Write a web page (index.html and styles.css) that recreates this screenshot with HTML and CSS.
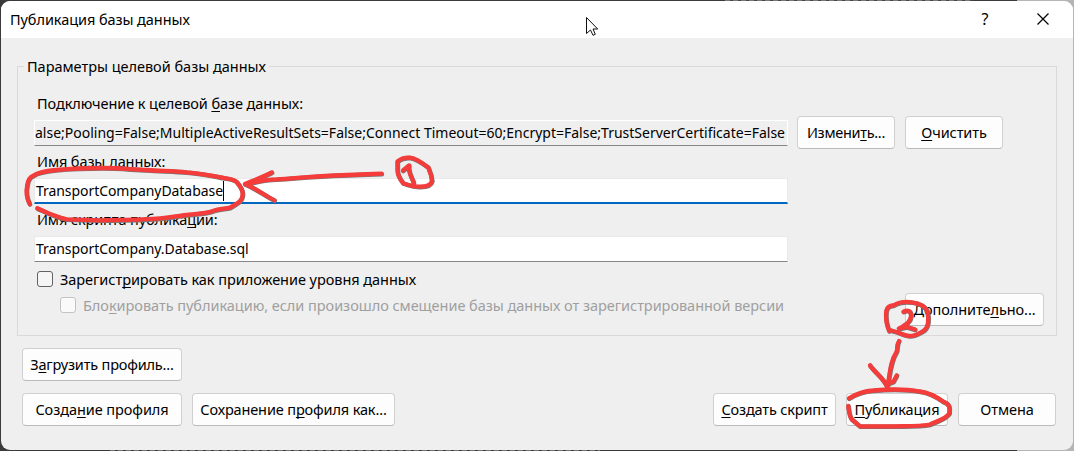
FILE: index.html
```html
<!DOCTYPE html>
<html lang="ru">
<head>
<meta charset="utf-8">
<title>Публикация базы данных</title>
<link rel="stylesheet" href="styles.css">
</head>
<body>
<div class="desktop">
  <div class="dialog">
    <header class="titlebar">
      <span class="title">Публикация базы данных</span>
      <span class="help">?</span>
      <svg class="close" width="12" height="12" viewBox="0 0 12 12"><path d="M.5 .5 11.5 11.5M11.5 .5 .5 11.5"/></svg>
    </header>
    <main class="content">
      <fieldset class="group">
        <legend>Параметры целевой базы данных</legend>
        <div class="label label-first">Подключение к целевой <u>б</u>азе данных:</div>
        <div class="connection">
          <div class="field readonly"><span>alse;Pooling=False;MultipleActiveResultSets=False;Connect Timeout=60;Encrypt=False;TrustServerCertificate=False</span></div>
          <button class="btn w98 tight">Измени<u>т</u>ь...</button>
          <button class="btn w98 clear"><u>О</u>чистить</button>
        </div>
        <div class="label label-name">И<u>м</u>я базы данных:</div>
        <div class="field focused"><span>TransportCompanyDatabase</span><i class="caret"></i></div>
        <div class="label label-script">Имя скрипта публика<u>ц</u>ии:</div>
        <div class="field"><span>TransportCompany.Database.sql</span></div>
        <div class="options">
          <div class="checks">
            <div class="check"><i class="box"></i><span>Зарегист<u>р</u>ировать как приложение уровня данных</span></div>
            <div class="check disabled"><i class="box"></i><span>Бло<u>к</u>ировать публикацию, если произошло смещение базы данных от зарегистрированной версии</span></div>
          </div>
          <button class="btn advanced">Дополните<u>л</u>ьно...</button>
        </div>
      </fieldset>
      <div class="actions load-row">
        <button class="btn w160 load">З<u>а</u>грузить профиль...</button>
      </div>
      <div class="actions">
        <button class="btn w160">Созда<u>н</u>ие профиля</button>
        <button class="btn w203">Сохранение п<u>р</u>офиля как...</button>
        <button class="btn w123 push"><u>С</u>оздать скрипт</button>
        <button class="btn w102"><u>П</u>убликация</button>
        <button class="btn w98">Отмена</button>
      </div>
    </main>
  </div>
  <svg class="marks" width="1074" height="451" viewBox="0 0 1074 451">
    <defs>
      <g id="strokes">
        <path d="M29.7 204C26 197 26 191 27.3 185 28 180 30 177 33.3 175.7 38 172 46 171 56 170 72 168.5 88 168 103 168 120 168 132 169.5 146.7 170 160 171 174 171 186.7 172.3 198 173 208 175 216.7 176.5 226 179 233 178 236.7 182 241 187 242.7 190 242.7 194 242.5 200 240 202 230 207.7 225 209 219 208.500 213 211 206 213.500 196 214 186.700 215 176 216 168 218 156.700 218.700 138 220 120 220 100 220.300L66.700 219.300C60 218 56 216 50 214L37.300 208.300"/>
        <path d="M245 184C256 182 264 179.500 276.700 179.300 304 177.500 330 175 360 174.500L381.500 173.700M271.700 172.500C263 177 252 181 245 184 255 188 264 195 274.300 200.300"/>
        <path d="M397.500 170V161.500C401 158.500 406 157.500 410 157.700 415 158 421 162 428.300 167.500L431 175 432 181C431 185.500 427 186.700 420 186.700 411 187 407 184 403.300 183.300 399 178 397.500 174 397.500 170M403 170.500 409 165.500C408 173 412 177 413.700 183"/>
        <path d="M889.300 331C887 326 886 320 886 315 886 308 888 306 893.300 305.500 899 302 906 301.500 912 302.300 920 303 926 307 927.500 312 929 320 928 328 923.300 331 918 334 915 336 910 336 904 336 899 332 893 331L889.300 330"/>
        <path d="M903.500 311.700C908 309.500 911 311 911 315.500 911 321 907 324 898.800 328.700L907 327 915 329.500"/>
        <path d="M899 341C896 346 898 349 896.500 352 890 362 890 374 887.300 388M870 365.300C874 372 883 377 887.300 387M887.300 384 893.500 381.500 896.700 375.500"/>
        <path d="M849 398.300C856 394 864 391 873 390.500 890 389 906 389 920 391.500 931 393 938 398 943 401.500 950 404 950 408 949.300 413.300 946 419 937 421 930 424.500 919 426.500 907 426 894 426.300H860L852 419.500C849 416 849 411 848.300 406"/>
      </g>
    </defs>
    <use href="#strokes" class="ink-shadow"/>
    <use href="#strokes" class="ink"/>
    <path class="cursor" d="M586.500 17.500V33.500L590.500 30 593 35.300 595.300 34.300 593 29H597.700Z"/>
  </svg>
</div>
</body>
</html>
```
FILE: styles.css
```css
* { box-sizing: border-box; }
body { margin: 0; font: 14.5px/20px "Noto Sans", sans-serif; color: #000; }
u { text-decoration-thickness: 1px; text-underline-offset: 2px; text-decoration-skip-ink: none; }
.desktop {
  position: relative; width: 1074px; height: 451px; padding: 1px; overflow: hidden;
  background:
    repeating-linear-gradient(to right, #77777a 0 5px, #454545 5px 8px) 725px 0 / 248px 1px no-repeat,
    repeating-linear-gradient(to right, #70706b 0 5px, #3b3b3b 5px 8px) 110px 450px / 490px 1px no-repeat,
    linear-gradient(to right, #3a3a3a 0 1017px, #b5b5b5 1017px);
}
.dialog { height: 449px; border-radius: 9px; overflow: hidden; background: #efefef; }
.titlebar {
  display: flex; align-items: center; height: 37px; padding: 0 24px 1px 9px; background: #fff;
}
.title { letter-spacing: -.07px; }
.help { margin-left: auto; width: 10px; text-align: center; font-size: 16px; }
.close { margin-left: 47px; fill: none; stroke: #000; stroke-width: 1.2; }
.content { padding: 18px 16px 0; }
.group {
  height: 280px; margin: 0; padding: 0 12px 0 16px; border: 1px solid #d9d9d9;
}
legend { margin-left: -10px; padding: 0 3px; letter-spacing: -.02px; }
.label { padding-left: 3px; }
.label-first { margin-top: 17px; letter-spacing: -.08px; }
.label-name { margin-top: 2px; letter-spacing: -.1px; }
.label-script { margin-top: 5px; letter-spacing: -.1px; }
.connection { display: flex; height: 33px; margin-top: 3px; }
.connection .field { flex: none; margin: 4px 9px 0 0; }
.clear { margin-left: 10px; }
.field {
  display: flex; align-items: center; width: 754px; height: 26px; margin-top: 7px;
  padding: 0 1px; overflow: hidden; white-space: nowrap; font-size: 14px; letter-spacing: -.06px;
  background: #fff; border: 1px solid #e9e9e9; border-bottom-color: #868686;
}
.readonly { background: #efefef; border-color: #fff #fff #868686; padding: 0; letter-spacing: 0; }
.focused { border-bottom: 2px solid #0067c0; }
.caret { width: 1px; height: 20px; background: #000; }
.btn {
  height: 33px; padding: 0 0 2px; font: inherit; color: inherit; white-space: nowrap;
  letter-spacing: -.07px;
  background: #fdfdfd; border: 1px solid #d0d0d0; border-bottom-color: #bababa; border-radius: 4px;
}
.w98 { width: 98px; }
.w102 { width: 102px; }
.w123 { width: 123px; letter-spacing: -.15px; }
.w160 { width: 160px; }
.w203 { width: 203px; letter-spacing: -.14px; }
.tight { letter-spacing: -.3px; }
.load { letter-spacing: -.18px; }
.options { display: flex; justify-content: space-between; height: 60px; margin-top: 7px; }
.check {
  display: flex; align-items: center; gap: 7px; height: 20px; padding-left: 3px;
  white-space: nowrap; letter-spacing: -.045px;
}
.box { width: 16px; height: 16px; background: #f5f5f5; border: 1px solid #626262; border-radius: 3px; }
.disabled { margin-top: 6px; padding-left: 26px; color: #a0a0a0; letter-spacing: -.035px; }
.disabled .box { background: #fafafa; border-color: #c3c3c3; }
.advanced { flex: none; width: 139px; margin-top: 24px; letter-spacing: -.07px; }
.actions { display: flex; gap: 10px; padding: 0 1px 0 5px; }
.load-row { margin: 12px 0; }
.push { margin-left: auto; }
.marks { position: absolute; left: 0; top: 0; }
.ink, .ink-shadow { fill: none; stroke-linecap: round; stroke-linejoin: round; }
.ink { stroke: #f43c3b; stroke-width: 4.300px; }
.ink-shadow { stroke: #777; stroke-width: 4.600px; transform: translate(.4px, .5px); }
.cursor { fill: #fff; stroke: #111; stroke-width: 1; }
```
